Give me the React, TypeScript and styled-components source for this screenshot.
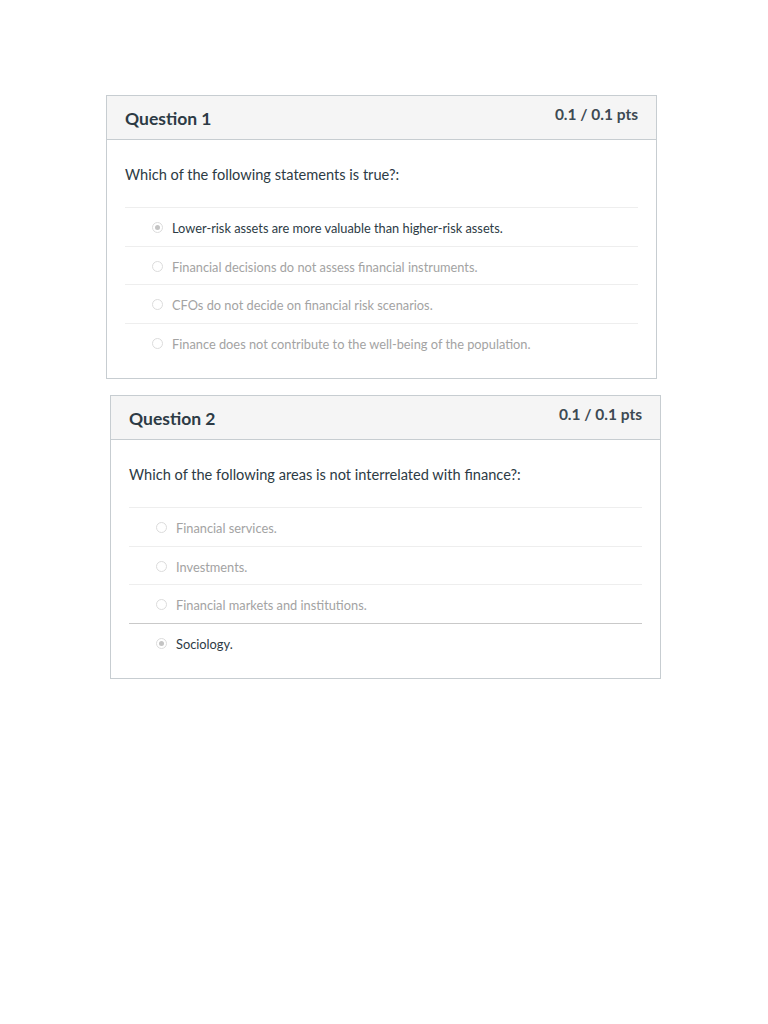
import React from 'react';
import styled, { createGlobalStyle } from 'styled-components';

const GlobalStyle = createGlobalStyle`
  body {
    margin: 0;
    background: #ffffff;
    font-family: Lato, "Liberation Sans", sans-serif;
    color: #2d3b45;
  }
`;

const Page = styled.div`
  width: 768px;
  min-height: 1024px;
  padding-top: 95px;
  box-sizing: border-box;
`;

const Card = styled.section<{ $left: number; $gap: number }>`
  width: 551px;
  margin-left: ${(p) => p.$left}px;
  margin-top: ${(p) => p.$gap}px;
  border: 1px solid #c7cdd1;
  box-sizing: border-box;
  background: #fff;
`;

const Header = styled.header`
  height: 44px;
  box-sizing: border-box;
  background: #f5f5f5;
  border-bottom: 1px solid #c7cdd1;
  display: flex;
  justify-content: space-between;
  align-items: flex-start;
  padding: 0 18px;
`;

const Title = styled.h2`
  margin: 0;
  padding-top: 12px;
  font-size: 17.5px;
  font-weight: 700;
  line-height: 22px;
  color: #2d3b45;
`;

const Points = styled.div`
  padding-top: 8px;
  font-size: 15.5px;
  font-weight: 700;
  line-height: 20px;
  color: #3d4a53;
`;

const Body = styled.div`
  padding: 25px 18px 17px;
`;

const Prompt = styled.p`
  margin: 0 0 22px;
  font-size: 14.6px;
  line-height: 20px;
`;

const Answers = styled.ul`
  list-style: none;
  margin: 0;
  padding: 0;
`;

const Answer = styled.li<{ $dark: boolean; $selected: boolean }>`
  height: 38.5px;
  box-sizing: border-box;
  border-top: 1px solid ${(p) => (p.$dark ? '#c9c9c9' : '#eeeeee')};
  display: flex;
  align-items: center;
  padding: 3px 0 0 27px;
  gap: 9px;
  font-size: 12.8px;
  color: ${(p) => (p.$selected ? '#2d3b45' : '#a3a3a3')};
`;

const Radio = styled.span<{ $selected: boolean }>`
  width: 11px;
  height: 11px;
  border-radius: 50%;
  border: 1px solid #dcdcdc;
  box-sizing: border-box;
  display: flex;
  align-items: center;
  justify-content: center;
  flex-shrink: 0;
  margin-top: -1px;

  &::after {
    content: '';
    width: 5px;
    height: 5px;
    border-radius: 50%;
    background: ${(p) => (p.$selected ? '#c4c4c4' : 'transparent')};
  }
`;

type Question = {
  title: string;
  points: string;
  prompt: string;
  answers: string[];
  selected: number;
  left: number;
  gap: number;
  darkLine: boolean;
};

const questions: Question[] = [
  {
    title: 'Question 1',
    points: '0.1 / 0.1 pts',
    prompt: 'Which of the following statements is true?:',
    answers: [
      'Lower-risk assets are more valuable than higher-risk assets.',
      'Financial decisions do not assess financial instruments.',
      'CFOs do not decide on financial risk scenarios.',
      'Finance does not contribute to the well-being of the population.',
    ],
    selected: 0,
    left: 106,
    gap: 0,
    darkLine: false,
  },
  {
    title: 'Question 2',
    points: '0.1 / 0.1 pts',
    prompt: 'Which of the following areas is not interrelated with finance?:',
    answers: [
      'Financial services.',
      'Investments.',
      'Financial markets and institutions.',
      'Sociology.',
    ],
    selected: 3,
    left: 110,
    gap: 16,
    darkLine: true,
  },
];

const App: React.FC = () => {
  return (
    <>
      <GlobalStyle />
      <Page>
        {questions.map((q) => (
          <Card key={q.title} $left={q.left} $gap={q.gap}>
            <Header>
              <Title>{q.title}</Title>
              <Points>{q.points}</Points>
            </Header>
            <Body>
              <Prompt>{q.prompt}</Prompt>
              <Answers>
                {q.answers.map((a, i) => (
                  <Answer
                    key={a}
                    $selected={i === q.selected}
                    $dark={q.darkLine && i === q.selected}
                  >
                    <Radio $selected={i === q.selected} />
                    {a}
                  </Answer>
                ))}
              </Answers>
            </Body>
          </Card>
        ))}
      </Page>
    </>
  );
};

export default App;
